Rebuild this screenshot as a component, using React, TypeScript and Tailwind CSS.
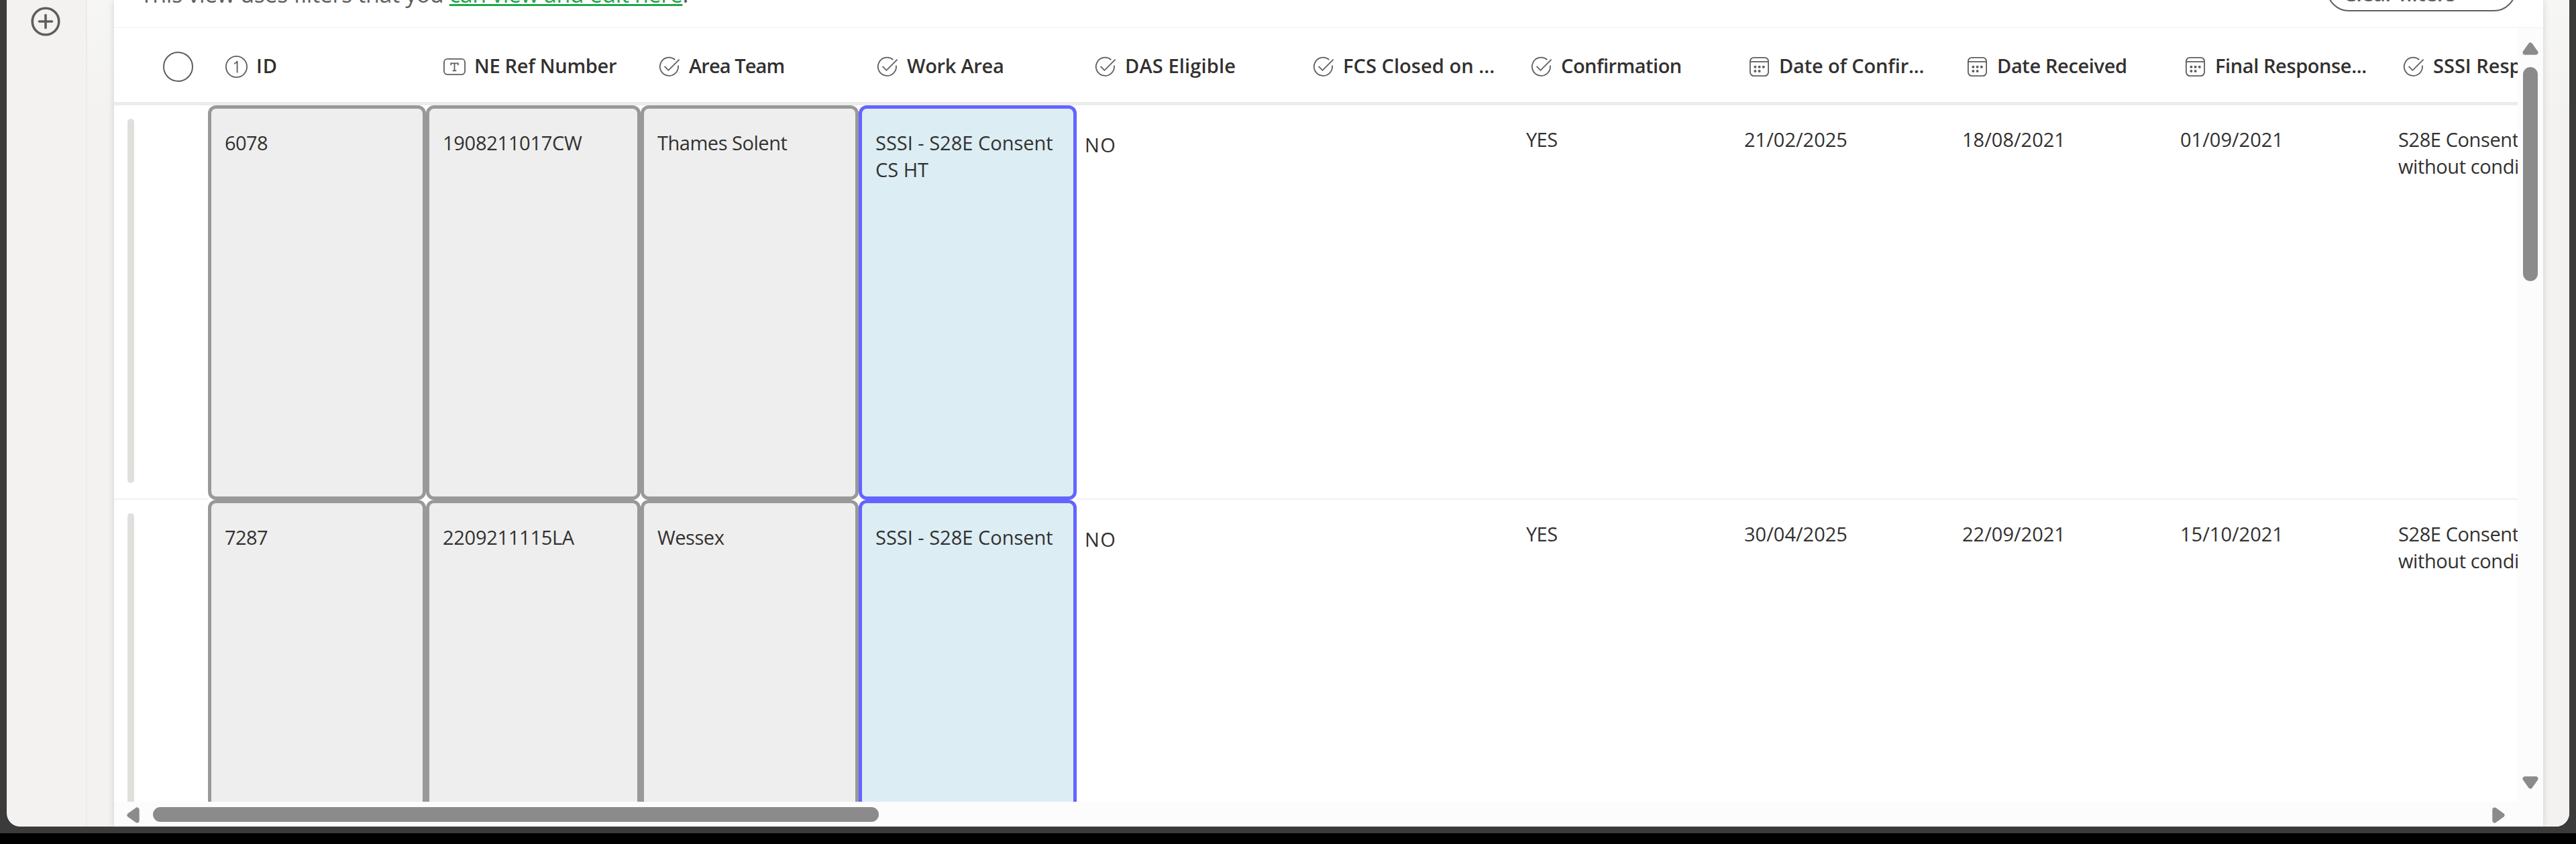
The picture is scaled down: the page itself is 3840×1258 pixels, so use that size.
import type { ReactNode } from 'react';

function IconBase({ children }: { children: ReactNode }) {
  return (
    <svg
      className="mt-1 ml-[25px] h-[35px] w-[35px] shrink-0"
      viewBox="0 0 35 35"
      fill="none"
      stroke="#605e5c"
      strokeWidth="1.8"
    >
      {children}
    </svg>
  );
}

function NumberIcon() {
  return (
    <IconBase>
      <circle cx="17.5" cy="17.5" r="15.6" />
      <path d="M14 13.2 C16.2 12.6 17.8 11 18.6 9.2 V26.5" />
    </IconBase>
  );
}

function TextIcon() {
  return (
    <IconBase>
      <rect x="1.9" y="5.9" width="31.2" height="23.2" rx="5" />
      <path d="M12.2 15.2 V12.4 H22.8 V15.2 M17.5 12.4 V23.4 M14.6 23.4 H20.4" />
    </IconBase>
  );
}

function CheckIcon() {
  return (
    <IconBase>
      <path d="M26.3 7 A13.6 13.6 0 1 0 30.9 15.6" />
      <path d="M10.6 16.9 L16.4 22.8 L32.6 6.6" />
    </IconBase>
  );
}

function CalendarIcon() {
  return (
    <IconBase>
      <rect x="3.9" y="3.9" width="27.2" height="27.2" rx="5.5" />
      <path d="M4 10 H31" />
      <g fill="#605e5c" stroke="none">
        <circle cx="11.4" cy="17.8" r="2" />
        <circle cx="17.6" cy="17.8" r="2" />
        <circle cx="23.8" cy="17.8" r="2" />
        <circle cx="11.4" cy="24" r="2" />
        <circle cx="17.6" cy="24" r="2" />
      </g>
    </IconBase>
  );
}

const COLUMNS: { label: string; icon: ReactNode; className: string }[] = [
  { label: 'ID', icon: <NumberIcon />, className: 'w-[325px] tracking-[1px]' },
  { label: 'NE Ref Number', icon: <TextIcon />, className: 'w-[320px] tracking-[-0.27px]' },
  { label: 'Area Team', icon: <CheckIcon />, className: 'w-[325px] tracking-[-0.9px]' },
  { label: 'Work Area', icon: <CheckIcon />, className: 'w-[325px] tracking-[-0.27px]' },
  { label: 'DAS Eligible', icon: <CheckIcon />, className: 'w-[325px] tracking-[0.15px]' },
  { label: 'FCS Closed on ...', icon: <CheckIcon />, className: 'w-[325px] tracking-[0.05px]' },
  { label: 'Confirmation', icon: <CheckIcon />, className: 'w-[325px] tracking-[-0.5px]' },
  { label: 'Date of Confir...', icon: <CalendarIcon />, className: 'w-[325px] tracking-[-0.15px]' },
  { label: 'Date Received', icon: <CalendarIcon />, className: 'w-[325px] tracking-[-0.37px]' },
  { label: 'Final Response...', icon: <CalendarIcon />, className: 'w-[325px] tracking-[-0.4px]' },
  { label: 'SSSI Response', icon: <CheckIcon />, className: 'w-[325px]' },
];

type Row = {
  id: string;
  ref: string;
  team: string;
  area: string;
  das: string;
  fcs: string;
  confirmation: string;
  confirmed: string;
  received: string;
  final: string;
  response: string;
};

const ROWS: Row[] = [
  {
    id: '6078',
    ref: '1908211017CW',
    team: 'Thames Solent',
    area: 'SSSI - S28E Consent CS HT',
    das: 'NO',
    fcs: '',
    confirmation: 'YES',
    confirmed: '21/02/2025',
    received: '18/08/2021',
    final: '01/09/2021',
    response: 'S28E Consent without conditions',
  },
  {
    id: '7287',
    ref: '2209211115LA',
    team: 'Wessex',
    area: 'SSSI - S28E Consent',
    das: 'NO',
    fcs: '',
    confirmation: 'YES',
    confirmed: '30/04/2025',
    received: '22/09/2021',
    final: '15/10/2021',
    response: 'S28E Consent without conditions',
  },
];

function GreyCell({ className, children }: { className: string; children: ReactNode }) {
  return (
    <div
      className={`shrink-0 rounded-[12px] border-[5px] border-[#999999] bg-[#eeeeee] pt-[31px] pl-5 ${className}`}
    >
      {children}
    </div>
  );
}

function PlainCell({ className = '', children }: { className?: string; children: ReactNode }) {
  return (
    <div
      className={`w-[325px] shrink-0 border-b-2 border-[#f1f1f0] pt-[31px] pl-5 ${className}`}
    >
      {children}
    </div>
  );
}

function TableRow({ row }: { row: Row }) {
  return (
    <div className="flex h-[588px] shrink-0">
      <div className="w-[140px] shrink-0 border-b-2 border-[#f1f1f0] pt-5 pb-[23px] pl-5">
        <div className="h-full w-[10px] rounded-full bg-[#e1dfdd]" />
      </div>
      <GreyCell className="w-[325px] tracking-[-0.58px]">{row.id}</GreyCell>
      <GreyCell className="w-[320px] tracking-[-0.28px]">{row.ref}</GreyCell>
      <GreyCell className="w-[325px] tracking-[-0.47px]">{row.team}</GreyCell>
      <div className="w-[325px] shrink-0 rounded-[12px] border-[5px] border-[#6464ff] bg-[#dcedf4] pt-[31px] pr-5 pl-5">
        {row.area}
      </div>
      <div className="w-[325px] shrink-0 border-b-2 border-[#f1f1f0] pt-[39px] pl-3 tracking-[1.5px]">
        {row.das}
      </div>
      <PlainCell>{row.fcs}</PlainCell>
      <PlainCell className="tracking-[-0.6px]">{row.confirmation}</PlainCell>
      <PlainCell>{row.confirmed}</PlainCell>
      <PlainCell>{row.received}</PlainCell>
      <PlainCell>{row.final}</PlainCell>
      <PlainCell className="pr-[60px] tracking-[-0.4px]">{row.response}</PlainCell>
    </div>
  );
}

function Arrow({ className }: { className: string }) {
  return (
    <svg className={`h-[24px] w-[24px] ${className}`} viewBox="0 0 24 24">
      <path
        d="M12 7 L20 18.2 H4 Z"
        fill="#8b8b8b"
        stroke="#8b8b8b"
        strokeWidth="7"
        strokeLinejoin="round"
      />
    </svg>
  );
}

function Toolbar() {
  return (
    <div className="flex h-[42px] shrink-0 items-start justify-between overflow-hidden border-b-2 border-[#f7f7f7] pr-[40px] pl-[39px] text-[#605e5c]">
      <p className="mt-[-29px] text-[34px] leading-[40px] whitespace-pre">
        <span className="tracking-[-0.38px]">This view uses filters that you </span>
        <a className="tracking-[-0.4px] text-[#21a64a] underline decoration-[3px] underline-offset-[2px] [text-decoration-skip-ink:none]">
          can view and edit here
        </a>
        .
      </p>
      <div className="mt-[-50px] h-[67px] w-[283px] rounded-full border-2 border-[#605e5c] pt-[18px] pl-[23px] text-[31px] leading-[40px] font-semibold tracking-[-0.4px]">
        Clear filters
      </div>
    </div>
  );
}

export default function App() {
  return (
    <div
      className="h-[1258px] w-[3840px] overflow-hidden bg-black text-[#323130]"
      style={{ fontFamily: '"Open Sans", "Noto Sans", sans-serif' }}
    >
      <div className="h-[1242px] bg-[#3b3b3b] px-[10px]">
        <div className="flex h-[1232px] overflow-hidden rounded-b-[20px] bg-[#f3f2f1]">
          <aside className="w-[120px] shrink-0 border-r-2 border-[#ecebea] pt-[10px] pl-[36px]">
            <svg className="h-[44px] w-[44px]" viewBox="0 0 44 44" fill="none" stroke="#605e5c">
              <circle cx="22" cy="22" r="19.8" strokeWidth="3.6" />
              <path d="M22 12.5 V31.5 M12.5 22 H31.5" strokeWidth="3.6" strokeLinecap="round" />
            </svg>
          </aside>
          <div className="flex min-w-0 flex-1 bg-linear-to-b from-[#f6f6f5] to-[#f3f2f1] to-[170px] pr-[39px] pl-[40px]">
            <main className="flex min-w-0 flex-1 flex-col bg-white shadow-[0_0_10px_rgba(0,0,0,0.14)]">
              <Toolbar />
              <div className="flex min-h-0 flex-1">
                <div className="flex w-[3583px] shrink-0 flex-col overflow-hidden">
                  <div className="flex h-[115px] shrink-0 items-center border-b-[5px] border-[#ebebea] pt-px text-[29px] leading-[40px] font-semibold">
                    <div className="w-[140px] shrink-0 pl-[73px]">
                      <div className="mt-1 h-[45px] w-[45px] rounded-full border-2 border-[#605e5c]" />
                    </div>
                    {COLUMNS.map((column) => (
                      <div
                        key={column.label}
                        className={`flex shrink-0 items-center whitespace-nowrap ${column.className}`}
                      >
                        {column.icon}
                        <span className="ml-3">{column.label}</span>
                      </div>
                    ))}
                  </div>
                  <div className="flex h-[1038px] shrink-0 flex-col overflow-hidden text-[29px] leading-[40px]">
                    {ROWS.map((row) => (
                      <TableRow key={row.id} row={row} />
                    ))}
                  </div>
                  <div className="flex flex-1 items-start bg-[#fcfcfc] pt-2">
                    <Arrow className="ml-[16px] -rotate-90" />
                    <div className="ml-[18px] h-[22px] w-[1082px] rounded-full bg-[#8b8b8b]" />
                    <Arrow className="mr-[16px] ml-auto rotate-90" />
                  </div>
                </div>
                <div className="flex flex-1 flex-col items-center bg-[#fcfcfc] pt-[18px] pb-[53px]">
                  <Arrow className="" />
                  <div className="mt-4 h-[319px] w-[22px] rounded-full bg-[#8b8b8b]" />
                  <Arrow className="mt-auto rotate-180" />
                </div>
              </div>
            </main>
          </div>
        </div>
      </div>
    </div>
  );
}
